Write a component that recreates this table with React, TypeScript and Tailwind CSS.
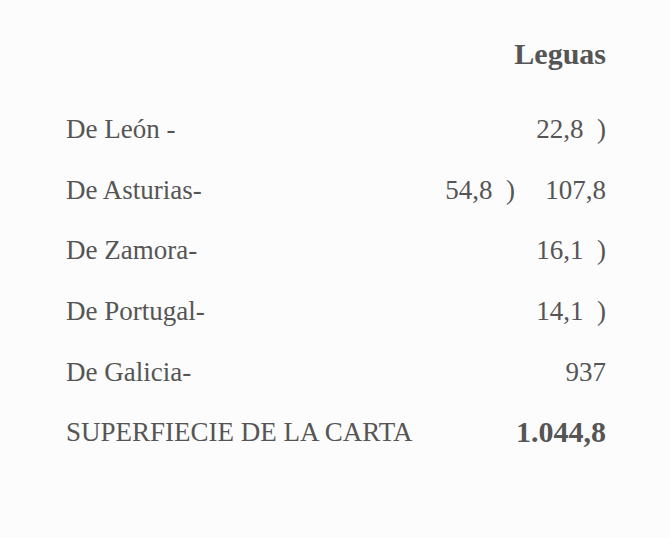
import React from "react";

const rows: { label: string; mid?: string; right: string; bold?: boolean }[] = [
  { label: "De León -", right: "22,8\u00a0\u00a0)" },
  { label: "De Asturias-", mid: "54,8\u00a0\u00a0)", right: "107,8" },
  { label: "De Zamora-", right: "16,1\u00a0\u00a0)" },
  { label: "De Portugal-", right: "14,1\u00a0\u00a0)" },
  { label: "De Galicia-", right: "937" },
  { label: "SUPERFIECIE DE LA CARTA", right: "1.044,8", bold: true },
];

export default function App() {
  return (
    <div
      className="w-[670px] h-[538px] bg-[#fcfcfc] text-[#555555] pl-[66px] pr-[64px] pt-[36px]"
      style={{ fontFamily: '"Liberation Serif", serif' }}
    >
      <div className="flex justify-end text-[30px] font-bold leading-[36px]">Leguas</div>
      <div className="mt-[27px] flex flex-col">
        {rows.map((r) => (
          <div key={r.label} className="flex items-center h-[60.6px] text-[27px] leading-[36px]">
            <div className="flex-1 whitespace-nowrap">{r.label}</div>
            {r.mid && <div className="w-[120px] text-right whitespace-nowrap">{r.mid}</div>}
            <div className={"w-[91px] text-right whitespace-nowrap " + (r.bold ? "font-bold text-[30px]" : "")}>{r.right}</div>
          </div>
        ))}
      </div>
    </div>
  );
}
